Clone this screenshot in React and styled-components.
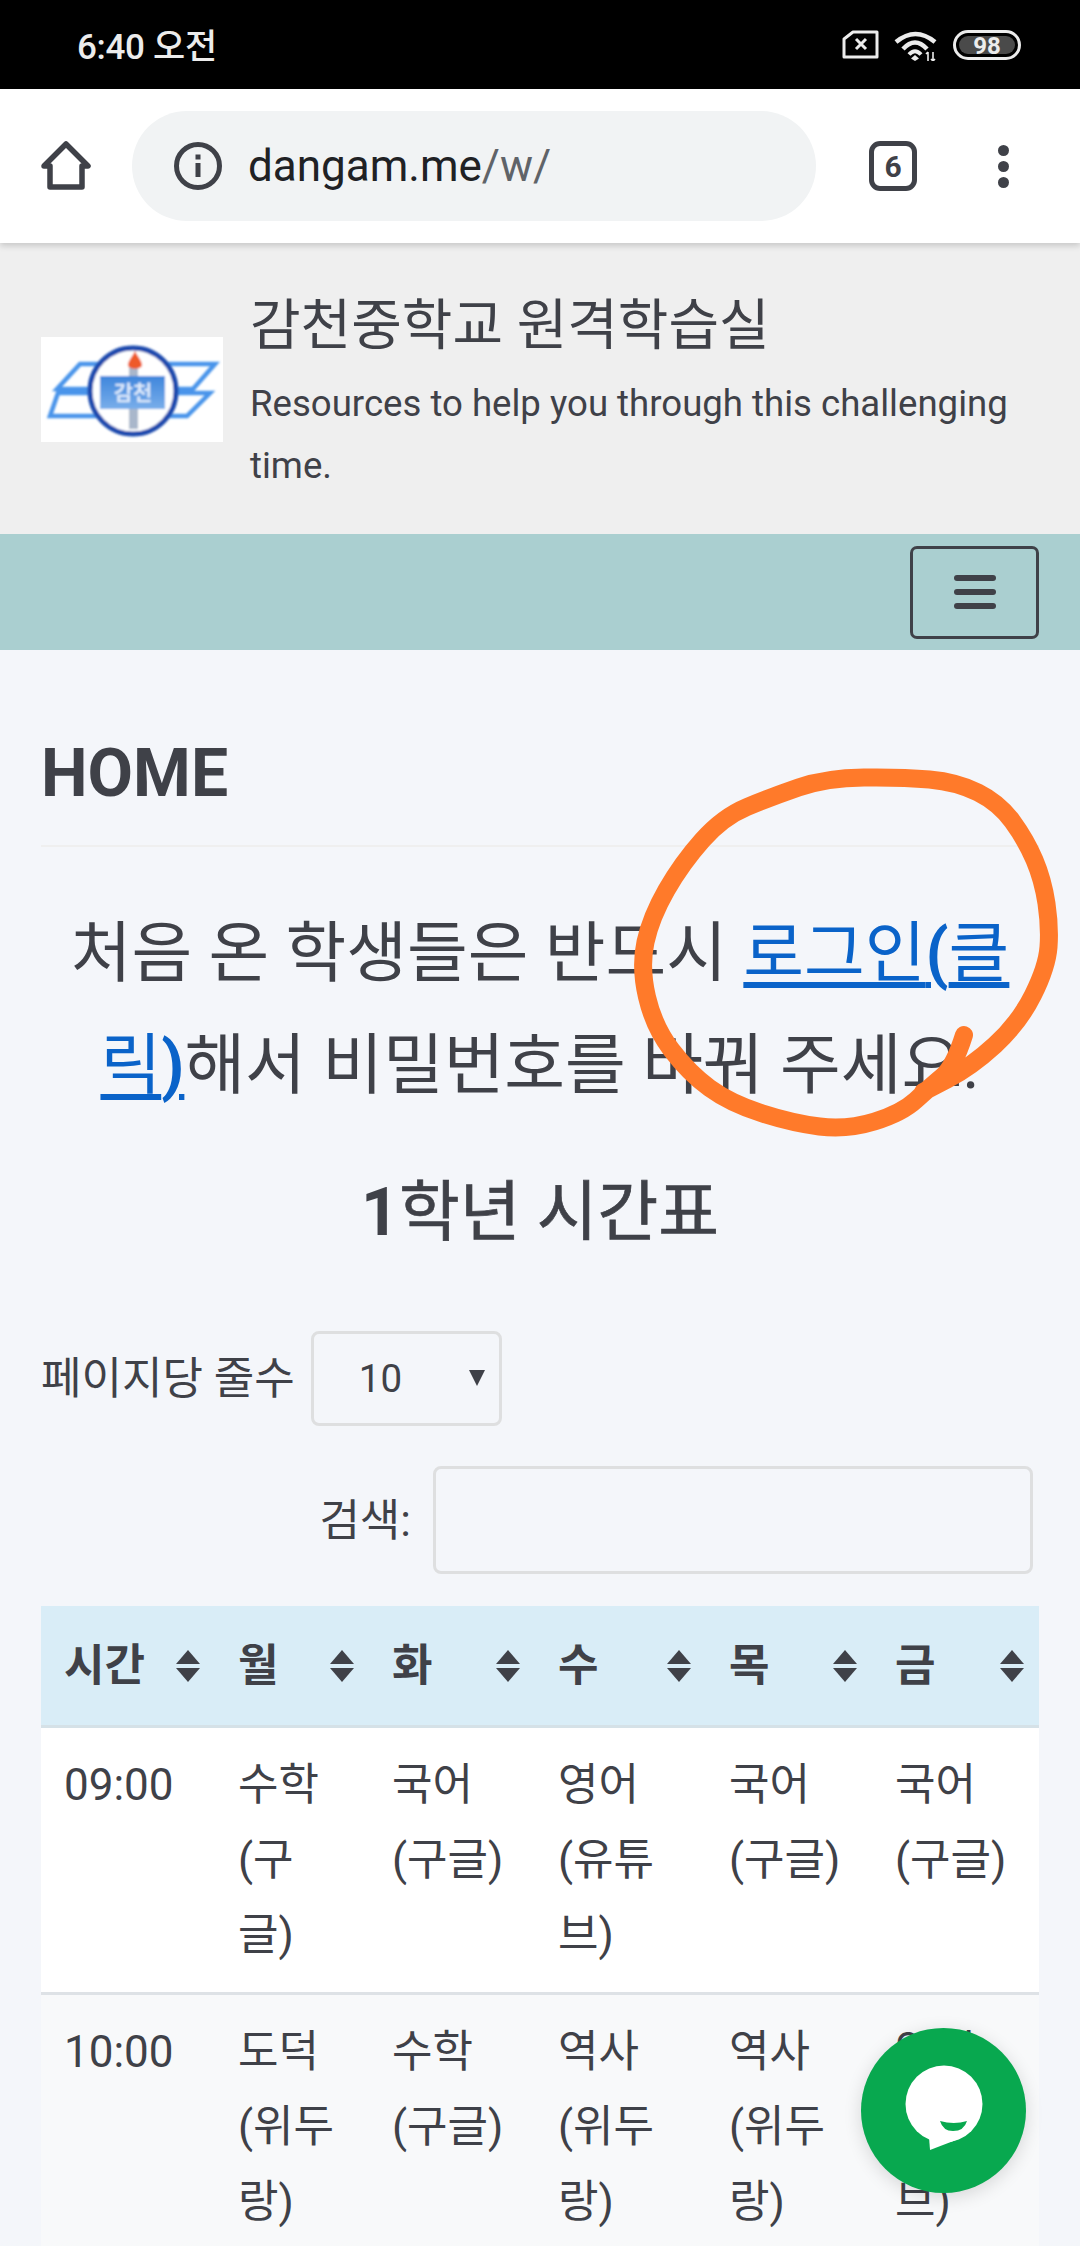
import React from 'react';
import styled, { createGlobalStyle } from 'styled-components';

const FONT = `Roboto, "Noto Sans CJK KR", sans-serif`;
const INK = '#3f4148';

const GlobalStyle = createGlobalStyle`
  html, body {
    margin: 0;
    padding: 0;
    background: #f4f6fa;
  }
  #root {
    font-family: ${FONT};
    color: ${INK};
  }
  * {
    box-sizing: border-box;
  }
`;

const Page = styled.div`
  position: relative;
  width: 1080px;
  height: 2246px;
  overflow: hidden;
  background: #f4f6fa;
`;

/* phone chrome */
const StatusBar = styled.div`
  height: 89px;
  background: #000;
  color: #ececec;
  display: flex;
  align-items: center;
  padding: 0 59px 0 77px;
`;
const Clock = styled.div`
  flex: 1;
  font-size: 35px;
  font-weight: 500;
  letter-spacing: -0.3px;
  margin-top: -2px;
`;
const StatusIcons = styled.div`
  display: flex;
  align-items: center;
  gap: 15px;
`;
const Toolbar = styled.div`
  height: 154px;
  background: #fff;
  display: flex;
  align-items: center;
  padding: 0 0 0 41px;
  position: relative;
  box-shadow: 0 3px 6px rgba(0, 0, 0, 0.16);
`;
const UrlPill = styled.div`
  width: 684px;
  height: 110px;
  margin-left: 41px;
  border-radius: 55px;
  background: #f1f3f4;
  display: flex;
  align-items: center;
  padding-left: 42px;
  gap: 26px;
`;
const UrlText = styled.div`
  font-size: 44px;
  color: #202124;
`;
const UrlPath = styled.span`
  color: #5f6368;
`;
const TabCount = styled.div`
  width: 48px;
  height: 50px;
  margin-left: 53px;
  border: 5px solid ${INK};
  border-radius: 11px;
  display: flex;
  align-items: center;
  justify-content: center;
  font-size: 30px;
  font-weight: 700;
  color: ${INK};
`;
const MenuDots = styled.div`
  margin-left: 81px;
  display: flex;
  flex-direction: column;
  gap: 5px;
`;
const Dot = styled.span`
  width: 11px;
  height: 11px;
  border-radius: 50%;
  background: ${INK};
`;

/* site header */
const SiteHeader = styled.header`
  height: 291px;
  background: #efefef;
  display: flex;
  align-items: center;
  padding: 0 30px 0 41px;
  gap: 27px;
`;
const LogoBox = styled.div`
  flex: 0 0 182px;
  height: 105px;
  background: #fff;
  margin-top: 2px;
`;
const BrandText = styled.div`
  flex: 1;
  padding-top: 4px;
`;
const BrandTitle = styled.div`
  font-size: 55px;
  line-height: 82px;
`;
const BrandTagline = styled.div`
  font-size: 36.6px;
  line-height: 61.6px;
  margin-top: 7px;
`;
const NavBar = styled.nav`
  height: 116px;
  background: #aacfd0;
  display: flex;
  align-items: center;
  justify-content: flex-end;
  padding-right: 41px;
`;
const NavToggle = styled.button`
  width: 129px;
  height: 93px;
  padding: 0;
  background: transparent;
  border: 3px solid ${INK};
  border-radius: 7px;
  display: flex;
  flex-direction: column;
  align-items: center;
  justify-content: center;
  gap: 8px;
`;
const NavLine = styled.span`
  width: 42px;
  height: 6px;
  border-radius: 3px;
  background: ${INK};
`;

/* main content */
const Main = styled.main`
  padding: 0 41px;
`;
const PageTitle = styled.h1`
  margin: 0;
  padding: 84px 0 32px;
  font-size: 66px;
  line-height: 79px;
  font-weight: 700;
  border-bottom: 2px solid #efefef;
`;
const Notice = styled.p`
  margin: 0;
  padding-top: 51px;
  font-size: 66px;
  line-height: 112.2px;
  text-align: center;
`;
const NoticeLink = styled.a`
  color: #0a63c9;
  text-decoration: underline;
  text-decoration-thickness: 6px;
  text-underline-offset: 6px;
`;
const BoldLatin = styled.span`
  font-weight: 700;
  -webkit-text-stroke: 0;
`;
const TableTitle = styled.h2`
  margin: 0;
  padding-top: 51px;
  font-size: 66px;
  line-height: 79px;
  font-weight: 400;
  -webkit-text-stroke: 0.7px ${INK};
  text-align: center;
`;
const LengthRow = styled.div`
  margin-top: 79px;
  display: flex;
  align-items: center;
  gap: 16px;
  font-size: 44px;
`;
const FieldLabel = styled.span`
  margin-bottom: 7px;
`;
const SelectBox = styled.div`
  width: 191px;
  height: 95px;
  border: 3px solid #dedfe0;
  border-radius: 8px;
  display: flex;
  align-items: center;
  justify-content: space-between;
  padding: 0 14px 0 45px;
  font-size: 38.5px;
`;
const SelectArrow = styled.span`
  width: 0;
  height: 0;
  border-left: 8px solid transparent;
  border-right: 8px solid transparent;
  border-top: 16px solid ${INK};
  margin-bottom: 2px;
`;
const SearchRow = styled.div`
  margin-top: 40px;
  padding-right: 6px;
  display: flex;
  align-items: center;
  justify-content: flex-end;
  gap: 22px;
  font-size: 44px;
`;
const SearchInput = styled.input`
  width: 600px;
  height: 108px;
  background: transparent;
  border: 3px solid #dedfe0;
  border-radius: 8px;
`;
const Timetable = styled.table`
  margin-top: 32px;
  width: 998px;
  table-layout: fixed;
  border-collapse: collapse;
  font-size: 44px;
`;
const HeadRow = styled.tr`
  background: #d9edf7;
  border-bottom: 3px solid #d5e1e7;
`;
const HeadCell = styled.th`
  height: 120px;
  padding: 0 15px 0 23px;
  text-align: left;
`;
const HeadInner = styled.div`
  display: flex;
  align-items: center;
  justify-content: space-between;
  font-weight: 700;
  line-height: 60px;
`;
const SortMark = styled.svg`
  flex: none;
`;
const BodyRow = styled.tr`
  background: ${(p) => (p.$striped ? '#f8f9fa' : '#fff')};
  border-bottom: 3px solid #dee2e6;
`;
const BodyCell = styled.td`
  padding: 20px 23px;
  line-height: 74.8px;
  vertical-align: top;
`;

/* things on top of the page */
const ScribbleLayer = styled.svg`
  position: absolute;
  left: 0;
  top: 0;
  pointer-events: none;
`;
const ChatButton = styled.div`
  position: absolute;
  left: 861px;
  top: 2028px;
  width: 165px;
  height: 165px;
  border-radius: 50%;
  background: #08a84f;
  box-shadow: 0 4px 18px rgba(0, 0, 0, 0.14);
  display: flex;
  align-items: center;
  justify-content: center;
  padding-bottom: 5px;
`;

const SimIcon = () => (
  <svg width="37" height="29" viewBox="0 0 37 29">
    <path d="M11 2H35V27H2V9Z" fill="none" stroke="#ececec" strokeWidth="3" strokeLinejoin="round" />
    <path d="M14 9l10 10M24 9L14 19" stroke="#ececec" strokeWidth="3" />
  </svg>
);

const WifiIcon = () => (
  <svg width="44" height="32" viewBox="0 0 44 32" fill="none" stroke="#ececec" strokeWidth="4.5">
    <path d="M2 13Q21.5 -3 41 13" />
    <path d="M9 20Q21 7 33 20" />
    <path d="M15 25.5Q21 19 27 25.5" strokeWidth="4" />
    <path d="M21 26l4 3.5-4 2.5-4-2.5Z" fill="#ececec" stroke="none" />
    <path d="M34 23v9M32 25l2-2 0 0M39 23v9M37 30l2 2 2-2" strokeWidth="1.6" />
  </svg>
);

const BatteryIcon = () => (
  <svg width="68" height="30" viewBox="0 0 68 30">
    <rect x="1.5" y="1.5" width="65" height="27" rx="13.5" fill="none" stroke="#ececec" strokeWidth="3" />
    <rect x="6" y="6" width="56" height="18" rx="9" fill="#4a4a4a" />
    <text x="34" y="23.5" textAnchor="middle" fontSize="24" fontWeight="700" fontFamily="Roboto, sans-serif" fill="#ececec">
      98
    </text>
  </svg>
);

const HomeIcon = () => (
  <svg width="50" height="50" viewBox="0 0 50 50">
    <path d="M25 3L47 25H41V46H9V25H3Z" fill="none" stroke={INK} strokeWidth="5.5" strokeLinejoin="round" />
  </svg>
);

const InfoIcon = () => (
  <svg width="48" height="48" viewBox="0 0 48 48">
    <circle cx="24" cy="24" r="21.5" fill="none" stroke={INK} strokeWidth="5" />
    <rect x="21.5" y="21" width="5" height="14" fill={INK} />
    <rect x="21.5" y="12.5" width="5" height="5" fill={INK} />
  </svg>
);

const SortIcon = () => (
  <SortMark width="24" height="32" viewBox="0 0 24 32">
    <path d="M12 0L24 14H0Z" fill={INK} />
    <path d="M0 18H24L12 32Z" fill={INK} />
  </SortMark>
);

const SchoolLogo = () => (
  <svg width="182" height="105" viewBox="0 0 182 105">
    <defs>
      <linearGradient id="plate" x1="0" y1="0" x2="0" y2="1">
        <stop offset="0" stopColor="#3f86dc" />
        <stop offset="1" stopColor="#79aeea" />
      </linearGradient>
      <filter id="soft">
        <feGaussianBlur stdDeviation="0.8" />
      </filter>
    </defs>
    <g filter="url(#soft)">
      <g fill="none" stroke="#4a94ea" strokeWidth="4.5">
        <path d="M39 27H174L152 52H16Z" />
        <path d="M17 56H169L146 79H9Z" />
      </g>
      <circle cx="92" cy="54" r="43" fill="#fff" stroke="#1b49ad" strokeWidth="5" />
      <rect x="88" y="28" width="9" height="64" fill="#a9b7cb" />
      <path d="M94 14C97 20 101 24 101 28C101 33 87 33 87 28C87 24 91 20 94 14Z" fill="#ee5a2a" />
      <rect x="59" y="39" width="65" height="33" fill="url(#plate)" />
      <text x="92" y="63" textAnchor="middle" fontSize="21" fontWeight="700" fontFamily={FONT} fill="#dbe9fb">
        감천
      </text>
    </g>
  </svg>
);

const ChatBubble = () => (
  <svg width="80" height="86" viewBox="0 0 80 86">
    <circle cx="40" cy="39" r="38.5" fill="#fff" />
    <path d="M25 72L26 85L52 75Z" fill="#fff" />
    <path d="M36 56Q50 60 63 56Q60 66 49 66Q39 66 36 56Z" fill="#08a84f" />
  </svg>
);

// hand drawn ring, traced from the screenshot
const SCRIBBLE = [
  [964, 1035], [954, 1067], [930, 1087], [902, 1113], [847, 1130], [792, 1123],
  [730, 1103], [689, 1073], [654, 1027], [640, 967], [651, 917], [682, 863],
  [723, 817], [771, 797], [826, 778], [902, 777], [957, 782], [999, 803],
  [1026, 840], [1043, 880], [1050, 927], [1047, 967], [1019, 1023], [971, 1067], [923, 1092],
];

const smoothPath = (pts) => {
  let d = `M${pts[0][0]} ${pts[0][1]}`;
  for (let i = 1; i < pts.length - 1; i++) {
    const mx = (pts[i][0] + pts[i + 1][0]) / 2;
    const my = (pts[i][1] + pts[i + 1][1]) / 2;
    d += `Q${pts[i][0]} ${pts[i][1]} ${mx} ${my}`;
  }
  const last = pts[pts.length - 1];
  return `${d}L${last[0]} ${last[1]}`;
};

const Scribble = () => (
  <ScribbleLayer width="1080" height="2246" viewBox="0 0 1080 2246">
    <path
      d={smoothPath(SCRIBBLE)}
      fill="none"
      stroke="#ff7a2a"
      strokeWidth="18"
      strokeLinecap="round"
      strokeLinejoin="round"
    />
  </ScribbleLayer>
);

const COLUMNS = [174, 154, 166, 171, 166, 167];
const HEADERS = ['시간', '월', '화', '수', '목', '금'];
const ROWS = [
  ['09:00', '수학(구글)', '국어(구글)', '영어(유튜브)', '국어(구글)', '국어(구글)'],
  ['10:00', '도덕(위두랑)', '수학(구글)', '역사(위두랑)', '역사(위두랑)', '영어(유튜브)'],
];

export default function App() {
  return (
    <Page>
      <GlobalStyle />
      <StatusBar>
        <Clock>6:40 오전</Clock>
        <StatusIcons>
          <SimIcon />
          <WifiIcon />
          <BatteryIcon />
        </StatusIcons>
      </StatusBar>
      <Toolbar>
        <HomeIcon />
        <UrlPill>
          <InfoIcon />
          <UrlText>
            dangam.me<UrlPath>/w/</UrlPath>
          </UrlText>
        </UrlPill>
        <TabCount>6</TabCount>
        <MenuDots>
          <Dot />
          <Dot />
          <Dot />
        </MenuDots>
      </Toolbar>
      <SiteHeader>
        <LogoBox>
          <SchoolLogo />
        </LogoBox>
        <BrandText>
          <BrandTitle>감천중학교 원격학습실</BrandTitle>
          <BrandTagline>Resources to help you through this challenging time.</BrandTagline>
        </BrandText>
      </SiteHeader>
      <NavBar>
        <NavToggle>
          <NavLine />
          <NavLine />
          <NavLine />
        </NavToggle>
      </NavBar>
      <Main>
        <PageTitle>HOME</PageTitle>
        <Notice>
          처음 온 학생들은 반드시{' '}
          <NoticeLink href="#">
            로그인<BoldLatin>(</BoldLatin>클릭<BoldLatin>)</BoldLatin>
          </NoticeLink>
          해서 비밀번호를 바꿔 주세요.
        </Notice>
        <TableTitle>
          <BoldLatin>1</BoldLatin>학년 시간표
        </TableTitle>
        <LengthRow>
          <FieldLabel>페이지당 줄수</FieldLabel>
          <SelectBox>
            10
            <SelectArrow />
          </SelectBox>
        </LengthRow>
        <SearchRow>
          <FieldLabel>검색:</FieldLabel>
          <SearchInput />
        </SearchRow>
        <Timetable>
          <colgroup>
            {COLUMNS.map((w, i) => (
              <col key={i} width={w} />
            ))}
          </colgroup>
          <thead>
            <HeadRow>
              {HEADERS.map((h) => (
                <HeadCell key={h}>
                  <HeadInner>
                    {h}
                    <SortIcon />
                  </HeadInner>
                </HeadCell>
              ))}
            </HeadRow>
          </thead>
          <tbody>
            {ROWS.map((row, i) => (
              <BodyRow key={row[0]} $striped={i % 2 === 1}>
                {row.map((cell, j) => (
                  <BodyCell key={j}>{cell.replace('(', ' (')}</BodyCell>
                ))}
              </BodyRow>
            ))}
          </tbody>
        </Timetable>
      </Main>
      <Scribble />
      <ChatButton>
        <ChatBubble />
      </ChatButton>
    </Page>
  );
}
